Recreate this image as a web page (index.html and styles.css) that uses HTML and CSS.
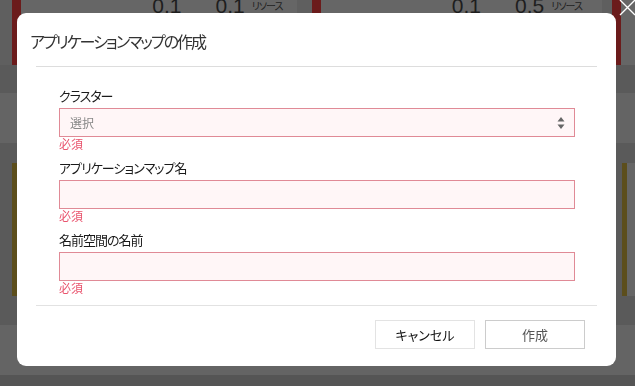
FILE: index.html
```html
<!DOCTYPE html>
<html lang="ja">
<head>
  <meta charset="UTF-8">
  <title>アプリケーションマップの作成</title>
  <link rel="stylesheet" href="styles.css">
</head>
<body>

  <div class="dashboard">
    <div class="stat-row">
      <div class="stat-card first">
        <span class="num">0.1</span>
        <span class="num">0.1</span>
        <span class="unit">リソース</span>
      </div>
      <div class="stat-card second">
        <span class="num">0.1</span>
        <span class="num">0.5</span>
        <span class="unit">リソース</span>
      </div>
      <div class="stat-card third"></div>
    </div>
    <div class="band dark" style="height: 28px"></div>
    <div class="band light" style="height: 50px"></div>
    <div class="band dark" style="height: 20px"></div>
    <div class="warn-row">
      <div class="warn-card wide"></div>
      <div class="warn-card"></div>
    </div>
    <div class="band dark" style="height: 29px"></div>
    <div class="band light" style="height: 50px"></div>
    <div class="band darker" style="height: 11px"></div>
  </div>

  <svg class="close-x" width="20" height="20" viewBox="0 0 20 20">
    <path d="M4 1 L19 16 M19 1 L4 16" stroke="#fff" stroke-width="1.4" fill="none"/>
  </svg>

  <div class="modal">
    <div class="modal-header">アプリケーションマップの作成</div>
    <div class="modal-body">
      <div class="field">
        <label>クラスター</label>
        <div class="select">
          <span>選択</span>
          <svg width="8" height="12" viewBox="0 0 8 12">
            <path d="M4 0 L7.5 4.5 L0.5 4.5 Z M4 12 L7.5 7.5 L0.5 7.5 Z" fill="#666"/>
          </svg>
        </div>
        <div class="req">必須</div>
      </div>
      <div class="field">
        <label>アプリケーションマップ名</label>
        <input type="text" class="text-input">
        <div class="req">必須</div>
      </div>
      <div class="field">
        <label>名前空間の名前</label>
        <input type="text" class="text-input">
        <div class="req">必須</div>
      </div>
    </div>
    <div class="modal-footer">
      <button class="btn cancel">キャンセル</button>
      <button class="btn create">作成</button>
    </div>
  </div>

</body>
</html>
```

FILE: styles.css
```css
body {
  margin: 0;
  background: #5a5a5a;
  font-family: "Noto Sans CJK JP", "Noto Sans", sans-serif;
  font-feature-settings: "palt";
  color: #222;
  overflow: hidden;
}
.dashboard {
  height: 386px;
}
.stat-row {
  display: flex;
  height: 65px;
  padding-left: 12px;
  background: #5f5f5f;
}
.stat-card {
  display: flex;
  justify-content: flex-end;
  align-items: flex-start;
  background: #666;
  border-left: 9px solid #6b1b1b;
  padding-right: 14px;
  overflow: hidden;
  box-sizing: border-box;
}
.stat-card.first {
  width: 285px;
  margin-right: 15px;
}
.stat-card.second {
  width: 291px;
  margin-right: 10px;
  padding-right: 20px;
}
.stat-card.third {
  flex: 1;
}
.num {
  font-family: "Liberation Sans", sans-serif;
  font-size: 21px;
  line-height: 20px;
  margin-top: -4px;
  margin-left: 34px;
  color: #1e1e1e;
}
.unit {
  font-size: 10px;
  line-height: 12px;
  margin-left: 7px;
  letter-spacing: -1px;
  color: #222;
}
.band.dark {
  background: #5a5a5a;
}
.band.light {
  background: #646464;
}
.band.darker {
  background: #555;
}
.warn-row {
  display: flex;
  height: 133px;
  padding-left: 12px;
  gap: 10px;
  background: #5a5a5a;
}
.warn-card {
  flex: 1;
  background: #666;
  border-left: 5px solid #5c4e1c;
}
.warn-card.wide {
  flex: 0 0 595px;
}
.close-x {
  position: fixed;
  left: 616px;
  top: -1px;
}

.modal {
  position: fixed;
  left: 17px;
  top: 13px;
  width: 599px;
  height: 353px;
  background: #fff;
  border-radius: 9px;
}
.modal-header {
  padding: 17px 13px 0;
  height: 53px;
  box-sizing: border-box;
  font-size: 16px;
  line-height: 22px;
  letter-spacing: -2px;
  color: #333;
}
.modal-body {
  margin: 0 19px;
  padding: 20px 22px 2px 23px;
  border-top: 1px solid #ddd;
  border-bottom: 1px solid #e2e2e2;
}
.field {
  margin-bottom: 8px;
}
.field label {
  display: block;
  font-size: 13px;
  line-height: 18px;
  margin-bottom: 3px;
  letter-spacing: -1px;
  color: #1a1a1a;
}
.select, .text-input {
  display: flex;
  align-items: center;
  justify-content: space-between;
  width: 100%;
  height: 29px;
  box-sizing: border-box;
  border: 1px solid #e08a96;
  background: #fff6f7;
  margin: 0;
  padding: 0 9px 0 10px;
  font-family: inherit;
  font-size: 12px;
}
.select span {
  color: #888;
}
.req {
  font-size: 12px;
  line-height: 14px;
  color: #e9546e;
}
.modal-footer {
  display: flex;
  justify-content: flex-end;
  gap: 10px;
  padding: 14px 31px 0 0;
}
.btn {
  width: 100px;
  height: 29px;
  background: #fff;
  font-family: inherit;
  font-feature-settings: "palt";
  font-size: 13px;
  cursor: pointer;
}
.btn.cancel {
  border: 1px solid #e3e3e3;
  color: #111;
}
.btn.create {
  border: 1px solid #ccc;
  color: #555;
}
```
